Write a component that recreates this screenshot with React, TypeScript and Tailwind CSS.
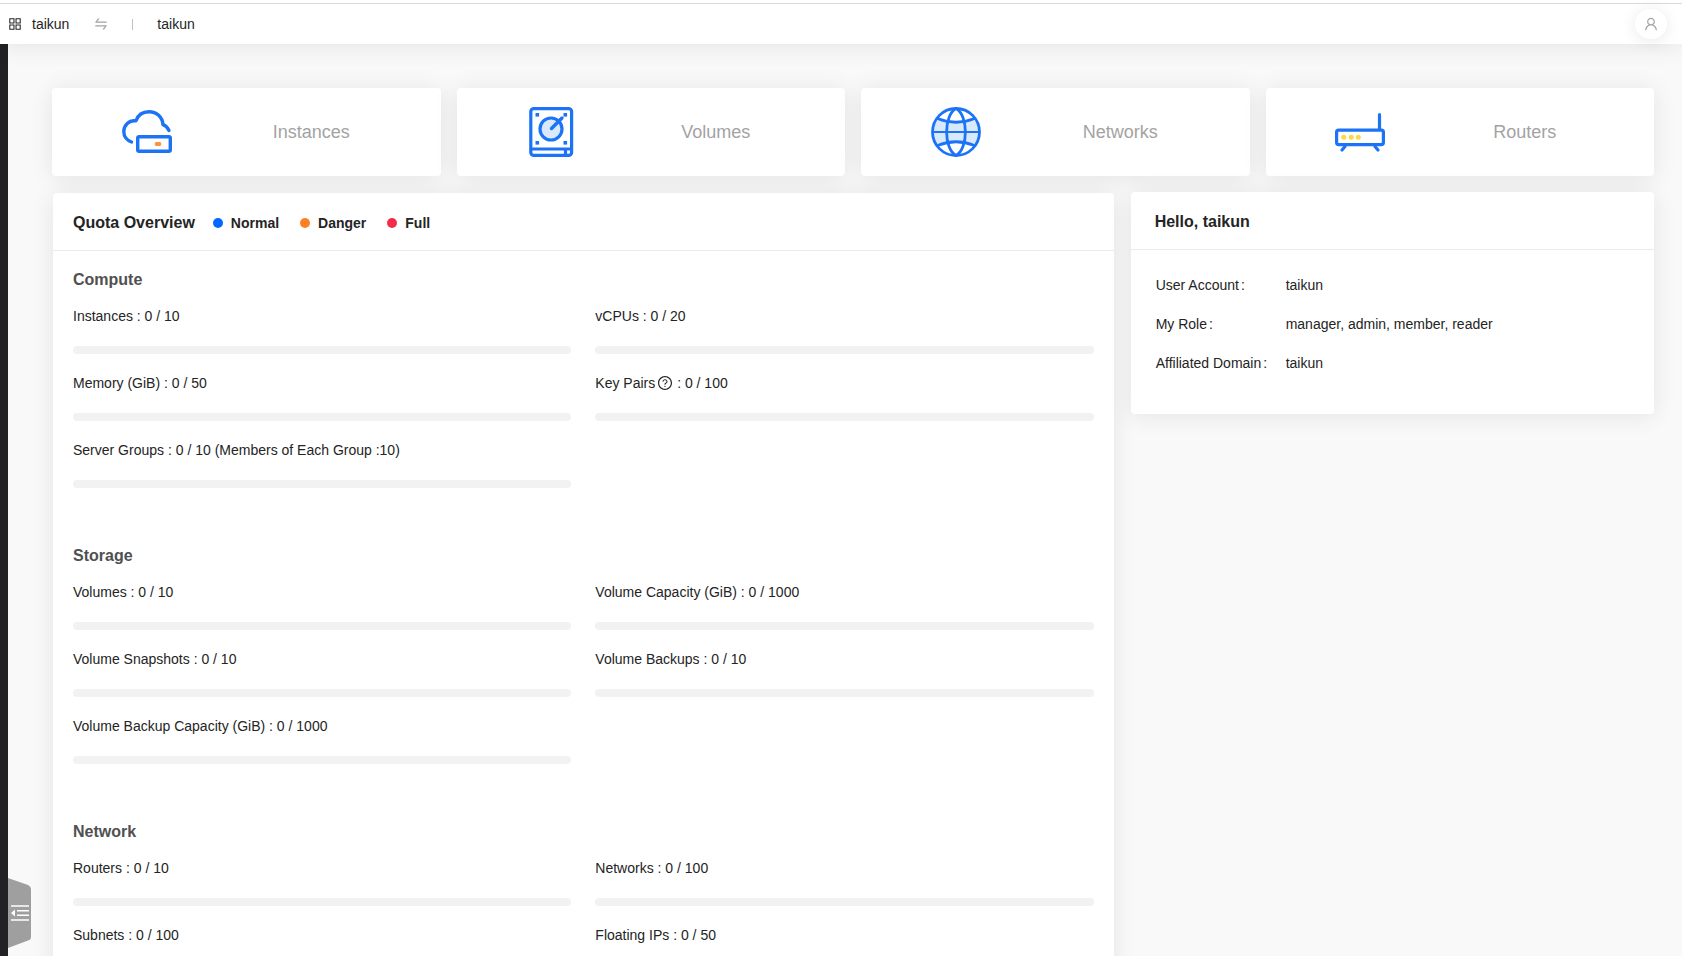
import type { ReactNode } from "react";
import {
  AiOutlineAppstore,
  AiOutlineQuestionCircle,
  AiOutlineSwap,
  AiOutlineUser,
} from "react-icons/ai";

const InstanceIcon = () => (
  <svg width="50" height="50" viewBox="0 0 50 50" fill="none" stroke="#1c73f5" strokeWidth="3.400" strokeLinecap="round" strokeLinejoin="round">
    <path d="M9.500 35C5 33.500 1.800 29.500 1.800 24.500C1.800 18 7 13 14 13.800C16 8 21 4.700 27 4.700C34.500 4.700 40.500 10 41 17.600C43.500 18.400 45.800 20.800 47 23.500" />
    <rect x="15.700" y="29.700" width="32.600" height="14.600" rx="1.500" />
    <path d="M34.500 37h3" stroke="#ff9140" strokeWidth="3.800" />
  </svg>
);

const VolumeIcon = () => (
  <svg width="50" height="50" viewBox="0 0 50 50" fill="none" stroke="#1c73f5" strokeWidth="3.200">
    <rect x="4.800" y="1.600" width="40.800" height="46.800" rx="3" />
    <path d="M4.800 42h40.800M39.500 42v6" />
    <circle cx="25" cy="22" r="11" fill="#d8e9fc" />
    <path d="M25.500 21.500l10.500-10.500" strokeLinecap="round" strokeWidth="3.400" />
    <g fill="#1c73f5" stroke="none">
      <rect x="9.500" y="6" width="3.600" height="3.600" />
      <rect x="37.500" y="6" width="3.600" height="3.600" />
      <rect x="9.500" y="34" width="3.600" height="3.600" />
      <rect x="37.500" y="34" width="3.600" height="3.600" />
    </g>
  </svg>
);

const NetworkIcon = () => (
  <svg width="50" height="50" viewBox="0 0 50 50" fill="none" stroke="#1c73f5" strokeWidth="2.800">
    <path d="M6.500 11.500Q25 19 43.500 11.500Q52 25 43.500 38.500Q25 31 6.500 38.500Q-2 25 6.500 11.500Z" fill="#d8e9fc" stroke="none" />
    <circle cx="25" cy="25" r="23.500" />
    <path d="M1.500 25h47" strokeWidth="2.200" />
    <path d="M6.500 11.500Q25 19 43.500 11.500M6.500 38.500Q25 31 43.500 38.500" />
    <path d="M25 1.500C12.500 8 12.500 42 25 48.500C37.500 42 37.500 8 25 1.500Z" />
  </svg>
);

const RouterIcon = () => (
  <svg width="50" height="50" viewBox="0 0 50 50" fill="none" stroke="#1c73f5" strokeWidth="3.200" strokeLinecap="round">
    <rect x="1.600" y="23.200" width="46.800" height="14.400" rx="2" />
    <path d="M44.500 7.500v15M10 39.500l-3 3.500M40 39.500l3 3.500" />
    <g fill="#ffd83d" stroke="none">
      <circle cx="8.800" cy="30.300" r="2.500" />
      <circle cx="16.200" cy="30.300" r="2.500" />
      <circle cx="23.300" cy="30.300" r="2.500" />
    </g>
  </svg>
);

const resources = [
  { title: "Instances", icon: InstanceIcon },
  { title: "Volumes", icon: VolumeIcon },
  { title: "Networks", icon: NetworkIcon },
  { title: "Routers", icon: RouterIcon },
];

const statuses = [
  { label: "Normal", color: "bg-[#0068ff]" },
  { label: "Danger", color: "bg-[#fe8025]" },
  { label: "Full", color: "bg-[#f42c4b]" },
];

type Quota = {
  name: string;
  used: number;
  limit: number;
  tip?: string;
  suffix?: string;
};

const quotaSections: { title: string; items: Quota[] }[] = [
  {
    title: "Compute",
    items: [
      { name: "Instances", used: 0, limit: 10 },
      { name: "vCPUs", used: 0, limit: 20 },
      { name: "Memory (GiB)", used: 0, limit: 50 },
      { name: "Key Pairs", used: 0, limit: 100, tip: "Key pairs are counted per user" },
      { name: "Server Groups", used: 0, limit: 10, suffix: " (Members of Each Group :10)" },
    ],
  },
  {
    title: "Storage",
    items: [
      { name: "Volumes", used: 0, limit: 10 },
      { name: "Volume Capacity (GiB)", used: 0, limit: 1000 },
      { name: "Volume Snapshots", used: 0, limit: 10 },
      { name: "Volume Backups", used: 0, limit: 10 },
      { name: "Volume Backup Capacity (GiB)", used: 0, limit: 1000 },
    ],
  },
  {
    title: "Network",
    items: [
      { name: "Routers", used: 0, limit: 10 },
      { name: "Networks", used: 0, limit: 100 },
      { name: "Subnets", used: 0, limit: 100 },
      { name: "Floating IPs", used: 0, limit: 50 },
    ],
  },
];

const account = [
  { label: "User Account", value: "taikun" },
  { label: "My Role", value: "manager, admin, member, reader" },
  { label: "Affiliated Domain", value: "taikun" },
];

function Card({ className = "", children }: { className?: string; children: ReactNode }) {
  return (
    <section className={`bg-white rounded-sm shadow-[0_2px_24px_0_rgba(0,0,0,0.09)] ${className}`}>
      {children}
    </section>
  );
}

function QuotaItem({ name, used, limit, tip, suffix }: Quota) {
  return (
    <div className="pb-[18px]">
      <div className="flex items-center whitespace-pre">
        {name}
        {tip && <AiOutlineQuestionCircle title={tip} className="w-4 h-4 ml-0.5" />}
        {` : ${used} / ${limit}${suffix ?? ""}`}
      </div>
      <div className="h-2 mt-[19px] rounded-full bg-[#f2f2f2] overflow-hidden">
        <div className="h-full bg-[#0068ff]" style={{ width: `${(used / limit) * 100}%` }} />
      </div>
    </div>
  );
}

export default function App() {
  return (
    <div className="h-screen flex flex-col overflow-hidden bg-[#f9f9f9] text-sm leading-[22px] text-[#242424] font-['Liberation_Sans',Arial,sans-serif]">
      {/* HEADER */}
      <header className="relative z-10 shrink-0 pt-[3px] bg-white shadow-[0_2px_24px_0_rgba(0,0,0,0.09)]">
        <div className="h-[41px] flex items-center pl-[7px] pr-[15px] border-t border-[#d9d9d9]">
          <a href="#" className="flex items-center gap-[9px]">
            <AiOutlineAppstore className="w-4 h-4" />
            taikun
          </a>
          <button type="button" aria-label="Switch project" className="ml-6 text-[#a3a3a3]">
            <AiOutlineSwap className="w-4 h-4" />
          </button>
          <span className="w-px h-[11px] ml-[23px] mr-6 bg-[#bfbfbf]" />
          <span>taikun</span>
          <button
            type="button"
            aria-label="User menu"
            className="ml-auto w-8 h-[30px] flex items-center justify-center rounded-full bg-white text-[#a3a3a3] shadow-[0_2px_16px_0_rgba(0,0,0,0.09)]"
          >
            <AiOutlineUser className="w-4 h-4" />
          </button>
        </div>
      </header>

      <div className="relative flex-1 min-h-0 flex">
        <aside className="w-2 shrink-0 bg-[#222126]" />

        {/* SIDEBAR TOGGLE */}
        <button type="button" aria-label="Expand menu" className="absolute left-2 bottom-2">
          <svg width="23" height="70" viewBox="0 0 23 70" fill="none">
            <path d="M0 0L20 7Q23 8.500 23 11V59Q23 61.500 20 62.500L0 70Z" fill="#9f9f9f" />
            <path d="M3 28h18M9 32.700h12M9 37.300h12M3 42h18" stroke="#fff" strokeWidth="1.600" />
            <path d="M3 35l4-3.500v7z" fill="#fff" />
          </svg>
        </button>

        <main className="flex-1 min-w-0 pt-11 pl-11 pr-7">
          <div className="grid grid-cols-4 gap-4">
            {resources.map((item) => (
              <a
                key={item.title}
                href="#"
                className="h-22 px-6 flex items-center bg-white rounded-sm shadow-[0_2px_24px_0_rgba(0,0,0,0.09)]"
              >
                <span className="w-5/12 flex justify-center">
                  <item.icon />
                </span>
                <span className="flex-1 pr-3 text-center text-lg text-[#a3a3a3]">{item.title}</span>
              </a>
            ))}
          </div>

          <div className="flex items-start -mx-2 mt-4">
            {/* QUOTA */}
            <div className="w-2/3 px-2">
              <Card className="m-px">
                <div className="h-[58px] pt-0.5 px-5 flex items-center border-b border-[#ebebeb] font-bold">
                  <h2 className="text-base mr-[18px]">Quota Overview</h2>
                  {statuses.map((status) => (
                    <span key={status.label} className="flex items-center gap-2 mr-[21px]">
                      <i className={`w-2.5 h-2.5 rounded-full ${status.color}`} />
                      {status.label}
                    </span>
                  ))}
                </div>

                <div className="px-5 pt-[17px]">
                  {quotaSections.map((section) => (
                    <div key={section.title} className="pb-[38px]">
                      <h3 className="mb-[13px] text-base font-bold text-[#505050]">{section.title}</h3>
                      <div className="grid grid-cols-2 gap-x-6">
                        {section.items.map((item) => (
                          <QuotaItem key={item.name} {...item} />
                        ))}
                      </div>
                    </div>
                  ))}
                </div>
              </Card>
            </div>

            {/* ACCOUNT */}
            <div className="w-1/3 px-2">
              <Card>
                <div className="h-[58px] pt-0.5 px-6 flex items-center border-b border-[#ebebeb]">
                  <h2 className="text-base font-bold">Hello, taikun</h2>
                </div>
                <dl className="px-[25px] pt-6 pb-10 flex flex-col gap-[17px]">
                  {account.map((row) => (
                    <div key={row.label} className="flex">
                      <dt className="w-[130px] shrink-0">
                        {row.label}
                        <span className="ml-0.5">:</span>
                      </dt>
                      <dd>{row.value}</dd>
                    </div>
                  ))}
                </dl>
              </Card>
            </div>
          </div>
        </main>
      </div>
    </div>
  );
}
